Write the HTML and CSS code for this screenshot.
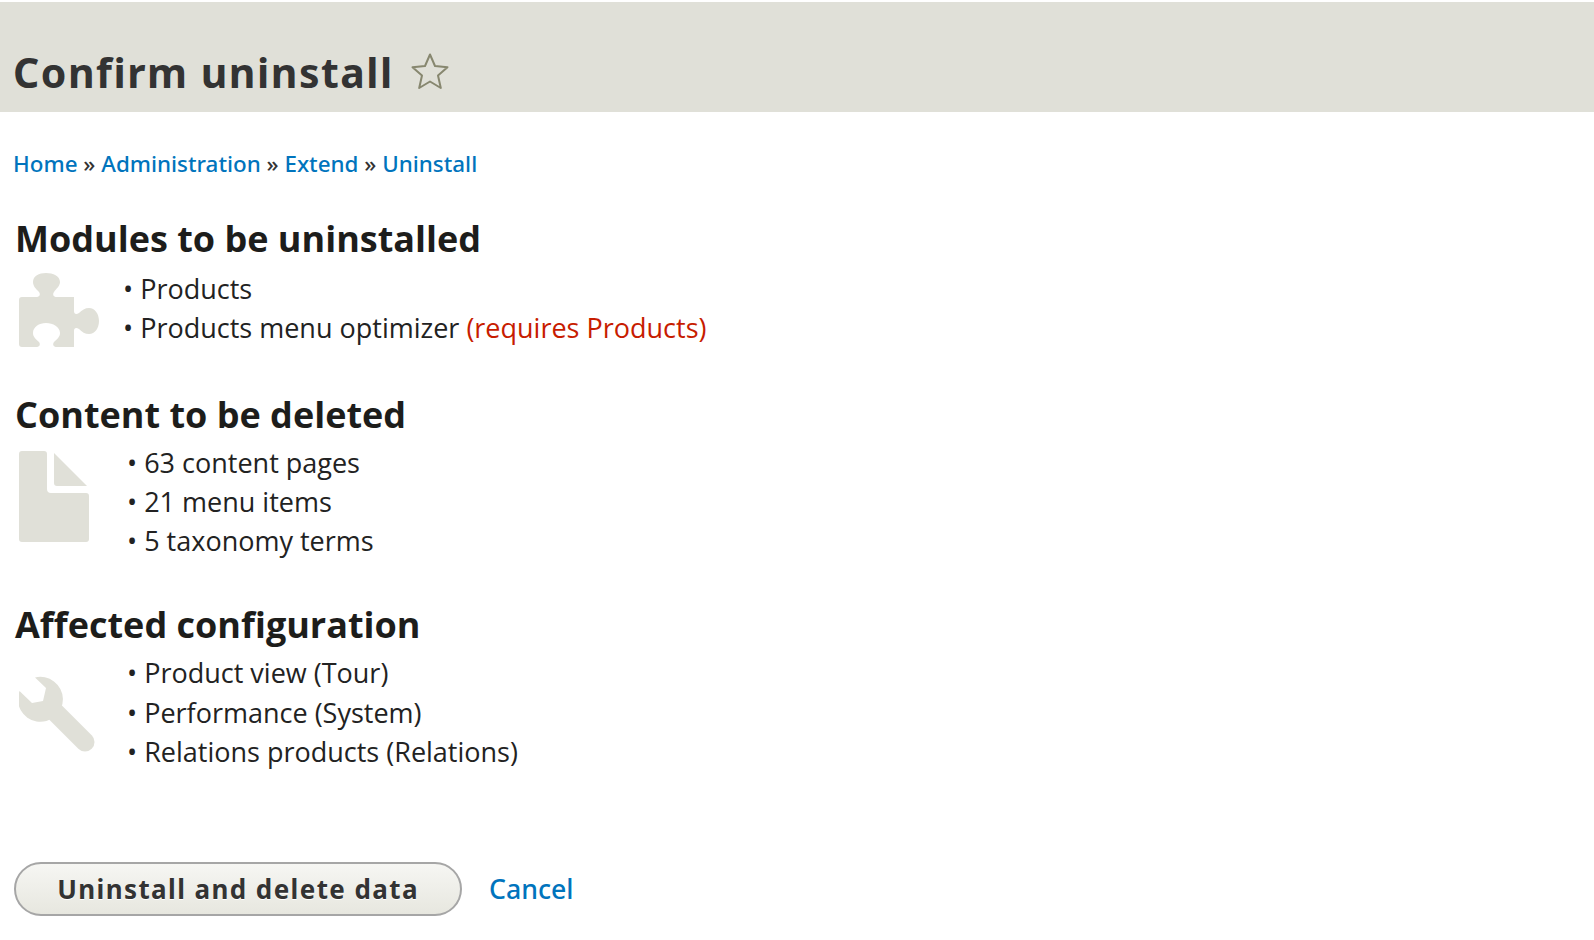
FILE: index.html
```html
<!DOCTYPE html>
<html lang="en">
<head>
<meta charset="utf-8">
<title>Confirm uninstall</title>
<link rel="stylesheet" href="styles.css">
</head>
<body>
<header class="page-head">
  <h1 class="page-title">Confirm uninstall</h1>
  <svg class="star" width="38" height="37" viewBox="0 0 38 37"><path d="M19 1.5 L24 13 L36.5 14.2 L27 22.5 L29.8 35 L19 28.5 L8.2 35 L11 22.5 L1.5 14.2 L14 13 Z" fill="none" stroke="#87876f" stroke-width="2" stroke-linejoin="round"/></svg>
</header>
<nav class="crumbs"><a href="#">Home</a> » <a href="#">Administration</a> » <a href="#">Extend</a> » <a href="#">Uninstall</a></nav>
<main class="content">
  <section class="group group-modules">
    <h2 class="group-title">Modules to be uninstalled</h2>
    <div class="group-body">
      <svg class="icon icon-puzzle" width="80" height="74" viewBox="0 0 80 74"><path fill="#e0e0d8" d="M3 24H17C20 24 22 22 20 19C17 16 14 13 14 9C14 3 20 0 27 0C34 0 41 3 41 9C41 13 37 16 35 19C33 22 35 24 38 24H55V38C55 41 57 42 60 40C63 37 66 35 70 35C76 35 80 41 80 48C80 55 76 61 70 61C66 61 63 59 60 56C57 54 55 55 55 58V74H38C35 74 33 72 35 69C38 66 41 64 41 60C41 54 34 50 27 50C20 50 14 54 14 60C14 64 17 66 20 69C22 72 20 74 17 74H3Q0 74 0 71V27Q0 24 3 24Z"/></svg>
      <ul class="items items-modules">
        <li>Products</li>
        <li>Products menu optimizer <span class="req">(requires Products)</span></li>
      </ul>
    </div>
  </section>
  <section class="group group-content">
    <h2 class="group-title">Content to be deleted</h2>
    <div class="group-body">
      <svg class="icon icon-doc" width="70" height="91" viewBox="0 0 70 91"><path fill="#e0e0d8" d="M3 0H25Q28 0 28 3V38Q28 42 32 42H67Q70 42 70 45V88Q70 91 67 91H3Q0 91 0 88V3Q0 0 3 0ZM35 2L68 35H38Q35 35 35 32Z"/></svg>
      <ul class="items">
        <li>63 content pages</li>
        <li>21 menu items</li>
        <li>5 taxonomy terms</li>
      </ul>
    </div>
  </section>
  <section class="group group-config">
    <h2 class="group-title">Affected configuration</h2>
    <div class="group-body">
      <svg class="icon icon-wrench" width="76" height="76" viewBox="0 0 76 76"><path fill="#e0e0d8" d="M16 1.5L27 12L24 25L13 27L0.5 15A22.5 22.5 0 1 0 16 1.5Z"/><path d="M33 33L66 66" stroke="#e0e0d8" stroke-width="19" stroke-linecap="round"/></svg>
      <ul class="items">
        <li>Product view (Tour)</li>
        <li>Performance (System)</li>
        <li>Relations products (Relations)</li>
      </ul>
    </div>
  </section>
  <div class="actions">
    <button class="btn" type="button">Uninstall and delete data</button>
    <a class="cancel" href="#">Cancel</a>
  </div>
</main>
</body>
</html>
```
FILE: styles.css
```css
html, body { margin: 0; padding: 0; background: #fff; }
body { font-family: "Open Sans", "Noto Sans", sans-serif; color: #1d1d1b; overflow: hidden; height: 940px; }
a { color: #0074bd; text-decoration: none; }

.page-head {
  margin-top: 2px; height: 110px; box-sizing: border-box;
  background: #e0e0d8; padding: 0 0 0 13px;
  display: flex; align-items: flex-start;
}
.page-title {
  margin: 40px 0 0; font: bold 41px/60px "Noto Sans", sans-serif;
  color: #333; letter-spacing: 1.5px;
}
.star { margin: 51px 0 0 17px; }

.crumbs {
  margin: 36px 0 0 13px; font: 500 22.4px/32px "Noto Sans", sans-serif; color: #333;
}

.content { padding-left: 15px; }
.group-title { margin: 0; font: bold 36px/48px "Open Sans", sans-serif; color: #1d1d1b; }
.group-modules { margin-top: 35px; }
.group-content { margin-top: 43px; }
.group-config { margin-top: 41px; }
.group-body { display: flex; align-items: flex-start; }
.icon { flex: none; margin-left: 4px; }
.icon-puzzle { margin-top: 10px; }
.icon-doc { margin-top: 12px; }
.icon-wrench { margin-top: 27px; }
.items { list-style: none; margin: 0; padding: 4px 0 0 33px; font-size: 27px; line-height: 39.3px; color: #222; }
.icon-doc + .items { padding-left: 38px; }
.icon-wrench + .items { padding-left: 32px; }
.items-modules { padding: 6px 0 0 24px; }
.items li::before { content: "• "; }
.req { color: #c71c00; }

.actions { margin-top: 91px; display: flex; align-items: center; gap: 27px; margin-left: -1px; }
.btn {
  width: 448px; height: 54px; border: 2px solid #a6a6a6; border-radius: 27px;
  background: linear-gradient(#f6f6f3, #e7e7df);
  font: bold 26px/1 "Noto Sans", sans-serif; color: #333; letter-spacing: 1.4px;
  text-shadow: 0 1px 0 #fff; padding: 0;
}
.cancel { font: 500 26.7px/1 "Noto Sans", sans-serif; }
```
